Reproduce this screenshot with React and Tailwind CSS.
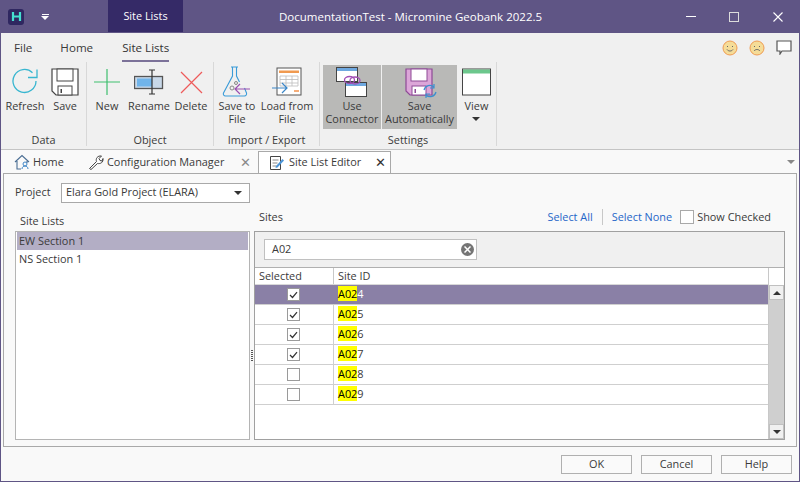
import React from "react";

const F = "font-['Open_Sans','Noto_Sans',sans-serif]";

function Check({ on }) {
  return (
    <span className="flex h-[13px] w-[13px] items-center justify-center border border-[#9a9a9a] bg-white">
      {on && (
        <svg width="9" height="8" viewBox="0 0 9 8" fill="none">
          <path d="M1 4l2.500 2.500L8 1.200" stroke="#333" strokeWidth="1.200" />
        </svg>
      )}
    </span>
  );
}

function Ribbon({ label, w, children, active, className = "" }) {
  return (
    <div className={`flex shrink-0 flex-col items-center ${active ? "bg-[#b9b9b7]" : ""} ${className}`} style={{ width: w }}>
      <div className="flex h-[34px] w-full shrink-0 items-center justify-center">{children}</div>
      <div className="whitespace-nowrap text-center leading-[13px]">{label}</div>
    </div>
  );
}

function Group({ title, w, children }) {
  return (
    <div className="flex h-full shrink-0 flex-col border-r border-[#d8d8d8]" style={{ width: w }}>
      <div className="flex h-[66px] shrink-0 pt-[3px]">{children}</div>
      <div className="pt-[5px] text-center leading-[14px]">{title}</div>
    </div>
  );
}

const Refresh = () => (
  <svg width="28" height="28" viewBox="0 0 28 28" fill="none">
    <path d="M25 13a11.500 11.500 0 1 1-3.500-8.300" stroke="#38b6d0" strokeWidth="1.300" />
    <path d="M17 9.500h9V1.500" stroke="#38b6d0" strokeWidth="1.300" />
  </svg>
);
const Disk = ({ fill = "#fff", stroke = "#444" }) => (
  <svg width="28" height="28" viewBox="0 0 28 28" fill="none">
    <path d="M1 1h26v26H5l-4-4z" fill={fill} stroke={stroke} strokeWidth="1.200" />
    <rect x="6" y="1" width="16" height="12" fill="#fff" stroke={stroke} strokeWidth="1" />
    <rect x="7" y="18" width="14" height="9" fill="#fff" stroke={stroke} strokeWidth="1" />
    <rect x="9.500" y="21" width="1.500" height="4" fill={stroke} />
  </svg>
);
const Flask = () => (
  <svg width="30" height="32" viewBox="0 0 30 32" fill="none">
    <path d="M9 1h7M10.500 1v9L1.500 27c-.6 1.500.3 3 2 3h19c1.500 0 2.400-1.500 2-3l-2-5M14.500 1v9l3 6" stroke="#3a9bd8" strokeWidth="1.100" />
    <circle cx="10" cy="22" r="2" stroke="#888" />
    <circle cx="14" cy="17" r="1.500" stroke="#888" />
    <path d="M28 23H13M18 18l-5 5 5 5" stroke="#9b4fb0" strokeWidth="1.200" />
  </svg>
);
const LoadIcon = () => (
  <svg width="30" height="30" viewBox="0 0 30 30" fill="none">
    <rect x="5" y="1" width="24" height="27" fill="#fff" stroke="#555" />
    <rect x="7" y="3.500" width="20" height="2.500" fill="#f09a50" />
    <path d="M8 9h18v10H8zM8 12.500h18M8 16h18M14 9v10M20 9v10" stroke="#bbb" strokeWidth=".8" />
    <path d="M22 24h5" stroke="#f08030" strokeWidth="1.300" />
    <path d="M0 21h15M10 16l5 5-5 5" stroke="#3a86c8" strokeWidth="1.200" />
  </svg>
);
const Connector = () => (
  <svg width="32" height="32" viewBox="0 0 32 32" fill="none">
    <rect x=".5" y="1.500" width="21" height="14" fill="#fff" stroke="#444" />
    <rect x="1" y="2" width="20" height="3" fill="#6ea8e0" />
    <rect x="9.500" y="16.500" width="21" height="14" fill="#fff" stroke="#444" />
    <rect x="10" y="17" width="20" height="3" fill="#6ea8e0" />
    <ellipse cx="13.500" cy="14" rx="5" ry="3.500" stroke="#a24db5" strokeWidth="1.300" />
    <ellipse cx="19" cy="14.500" rx="5" ry="3.500" stroke="#a24db5" strokeWidth="1.300" />
  </svg>
);

function Tab({ children, icon, close, active, w, closeClass = "text-[#8a8a8a]", mr = "mr-[7px]" }) {
  return (
    <div
      className={`flex shrink-0 items-center ${active ? "h-[22px] self-end border border-b-0 border-[#a9a9a9] bg-white" : "h-full pt-[1px]"}`}
      style={{ width: w }}
    >
      {icon}
      <span className="whitespace-nowrap">{children}</span>
      {close && <span className={`ml-auto ${mr} text-[13px] leading-none ${closeClass}`}>✕</span>}
    </div>
  );
}

const rows = [
  ["4", true, true],
  ["5", true],
  ["6", true],
  ["7", true],
  ["8", false],
  ["9", false],
];

export default function App() {
  return (
    <div className={`${F} flex h-[482px] w-[800px] flex-col overflow-hidden bg-[#5f5585] text-[10.9px] text-[#3a3a3a]`}>
      {/* title bar */}
      <div className="flex h-[33px] shrink-0 items-center text-white">
        <div className="ml-[8px] flex h-[16px] w-[16px] items-center justify-center rounded-[3px] bg-[#2f2760]">
          <svg width="11" height="11" viewBox="0 0 11 11" fill="none">
            <path d="M2 1v9M9 1v9M2 5.500h7" stroke="#45e0d0" strokeWidth="2.200" />
          </svg>
        </div>
        <div className="ml-[17px] flex w-[8px] flex-col items-center gap-[1px]">
          <span className="h-[1px] w-[7px] bg-white" />
          <span className="h-0 w-0 border-x-[4px] border-t-[4px] border-x-transparent border-t-white" />
        </div>
        <div className="ml-[59px] flex h-[32px] w-[75px] items-center justify-center self-start bg-[#352a67]">Site Lists</div>
        <div className="ml-[96px] w-[243px] whitespace-nowrap text-center text-[11.5px]">DocumentationTest - Micromine Geobank 2022.5</div>
        <div className="ml-auto flex items-center text-white">
          <span className="h-[1px] w-[10px] bg-white" />
          <span className="ml-[33px] h-[10px] w-[10px] border border-[#dcdcdc]" />
          <svg className="ml-[34px] mr-[17px]" width="10" height="10" viewBox="0 0 10 10" fill="none">
            <path d="M.5.500l9 9M9.500.500l-9 9" stroke="#fff" strokeWidth="1.100" />
          </svg>
        </div>
      </div>

      {/* body frame */}
      <div className="mx-[1px] mb-[1px] flex min-h-0 flex-1 flex-col bg-[#f9f9f9]">
        {/* ribbon tabs */}
        <div className="flex h-[29px] shrink-0 items-center bg-[#f0f0f0] text-[11.6px]">
          <span className="ml-[13px]">File</span>
          <span className="ml-[28px]">Home</span>
          <span className="relative ml-[29px] font-medium text-[#333]">
            Site Lists
            <span className="absolute -bottom-[6px] left-0 h-[2px] w-full bg-[#7c7299]" />
          </span>
          <div className="ml-auto mr-[7px] flex items-center gap-[11px]">
            <svg width="16" height="16" viewBox="0 0 16 16" fill="none">
              <circle cx="8" cy="8" r="7" fill="#f5dc98" stroke="#ef9b52" />
              <path d="M5 9.500c1.500 2 4.500 2 6 0M5.500 6v1M10.500 6v1" stroke="#666" />
            </svg>
            <svg width="16" height="16" viewBox="0 0 16 16" fill="none">
              <circle cx="8" cy="8" r="7" fill="#f5dc98" stroke="#ef9b52" />
              <path d="M5 11c1.500-2 4.500-2 6 0M5.500 6v1M10.500 6v1" stroke="#666" />
            </svg>
            <svg width="16" height="15" viewBox="0 0 16 15" fill="none">
              <path d="M1 1h14v10H6l-2 3v-3H1z" fill="#fff" stroke="#555" strokeWidth="1.200" />
            </svg>
          </div>
        </div>

        {/* ribbon */}
        <div className="flex h-[88px] shrink-0 border-b border-[#c4c4c4] bg-[#f0f0f0] pb-[3px]">
          <Group title="Data" w={86}>
            <Ribbon label="Refresh" w={48}><Refresh /></Ribbon>
            <Ribbon label="Save" w={32}><Disk fill="#fff" /></Ribbon>
          </Group>
          <Group title="Object" w={127}>
            <Ribbon label="New" w={40}>
              <svg width="26" height="26" viewBox="0 0 26 26" fill="none">
                <path d="M13 0v26M0 13h26" stroke="#3fbf6f" strokeWidth="1.200" />
              </svg>
            </Ribbon>
            <Ribbon label="Rename" w={44}>
              <svg width="30" height="26" viewBox="0 0 30 26" fill="none">
                <rect x=".5" y="7.500" width="28" height="12" fill="#c8d8e8" stroke="#555" strokeWidth="1.300" />
                <rect x="3" y="9.500" width="15" height="8" fill="#70b4ea" />
                <path d="M15 1h6M15 25h6M18 1v24" stroke="#333" strokeWidth="1.200" />
              </svg>
            </Ribbon>
            <Ribbon label="Delete" w={40}>
              <svg width="23" height="23" viewBox="0 0 23 23" fill="none">
                <path d="M1 1l21 21M22 1L1 22" stroke="#ee5a5a" strokeWidth="1.200" />
              </svg>
            </Ribbon>
          </Group>
          <Group title="Import / Export" w={106}>
            <Ribbon label={<>Save to<br />File</>} w={46}><Flask /></Ribbon>
            <Ribbon label={<>Load from<br />File</>} w={54}><LoadIcon /></Ribbon>
          </Group>
          <div className="flex h-full shrink-0 flex-col border-r border-[#d8d8d8]" style={{ width: 177 }}>
            <div className="flex h-[66px] shrink-0 pt-[3px]">
              <div className="ml-[3px] flex h-[64px]">
                <Ribbon label={<>Use<br />Connector</>} w={58} active><Connector /></Ribbon>
              </div>
              <div className="ml-[1px] flex h-[64px]">
                <Ribbon label={<>Save<br />Automatically</>} w={75} active>
                  <span className="relative block h-[28px] w-[30px]">
                    <Disk fill="#dca6d8" stroke="#8e4a96" />
                    <svg className="absolute -bottom-[3px] -right-[3px]" width="16" height="16" viewBox="0 0 16 16" fill="none">
                      <path d="M2 7a6 6 0 0 1 10-3M14 9a6 6 0 0 1-10 3M12 1v4H8M4 15v-4h4" stroke="#3a8fd0" strokeWidth="1.200" />
                    </svg>
                  </span>
                </Ribbon>
              </div>
              <Ribbon label={<>View<br /><span className="mx-auto mt-[5px] block h-0 w-0 border-x-[4px] border-t-[4px] border-x-transparent border-t-[#333]" /></>} w={39}>
                <svg width="29" height="28" viewBox="0 0 29 28" fill="none">
                  <rect x=".5" y="1" width="28" height="26" fill="#fff" stroke="#444" />
                  <rect x="1" y="1.500" width="27" height="4" fill="#6cc78c" />
                </svg>
              </Ribbon>
            </div>
            <div className="pt-[5px] text-center leading-[14px]">Settings</div>
          </div>
        </div>

        {/* doc tabs */}
        <div className="flex h-[23px] shrink-0 items-center bg-[#f9f9f9]">
          <div className="flex h-full items-center">
            <Tab w={72} icon={
              <svg className="ml-[13px] mr-[3px]" width="16" height="16" viewBox="0 0 16 16" fill="none">
                <path d="M1 8l7-6.500L15 8M3 7v8h4M13 7v2" stroke="#4a6d93" strokeWidth="1.100" />
                <circle cx="11" cy="10" r="2" stroke="#3f86c7" />
                <path d="M8 15c0-2 1.500-3 3-3s3 1 3 3" stroke="#3f86c7" />
              </svg>}>Home</Tab>
            <Tab w={185} close icon={
              <svg className="ml-[15px] mr-[3px]" width="16" height="16" viewBox="0 0 16 16" fill="none">
                <path d="M1.500 14.500l7-7c-1-3 1-6 5-5.500l-2.500 2.500 1 2 2 .5L15 4.500c.5 4-2.500 5.500-5.500 5l-6.500 6z" fill="#fff" stroke="#444" />
              </svg>}>Configuration Manager</Tab>
            <Tab w={133} active close mr="mr-[4px]" closeClass="text-[#333]" icon={
              <svg className="ml-[10px] mr-[4px]" width="16" height="16" viewBox="0 0 16 16" fill="none">
                <path d="M1.500 1.500h10v13h-10z" fill="#fff" stroke="#444" />
                <path d="M3.500 5h6M3.500 8h5M3.500 11h4" stroke="#888" />
                <path d="M7 11l6.500-7 1.500 1.500-6.500 7-2 .5z" fill="#4d96d8" />
              </svg>}>Site List Editor</Tab>
          </div>
          <span className="ml-auto mr-[4px] h-0 w-0 border-x-[4px] border-t-[4px] border-x-transparent border-t-[#888]" />
        </div>

        {/* editor panel */}
        <div className="mx-[2px] flex min-h-0 flex-1 flex-col border border-[#a9a9a9] bg-[#f9f9f9]">
          <div className="flex h-[37px] shrink-0 items-center">
            <span className="ml-[11px] w-[46px]">Project</span>
            <div className="flex h-[20px] w-[189px] items-center border border-[#a9a9a9] bg-white pl-[4px]">
              <span className="whitespace-nowrap">Elara Gold Project (ELARA)</span>
              <span className="ml-auto mr-[7px] h-0 w-0 border-x-[4px] border-t-[4px] border-x-transparent border-t-[#333]" />
            </div>
          </div>
          <div className="flex min-h-0 flex-1 pb-[6px]">
            {/* left */}
            <div className="ml-[11px] flex w-[235px] shrink-0 flex-col">
              <div className="h-[20px] pl-[5px] pt-[2px]">Site Lists</div>
              <div className="flex-1 border border-[#b4b4b4] bg-white px-[1px]">
                <div className="flex h-[18px] items-center bg-[#b3aec5] pl-[2px]">EW Section 1</div>
                <div className="flex h-[18px] items-center pl-[2px]">NS Section 1</div>
              </div>
            </div>
            {/* splitter */}
            <div className="flex w-[4px] shrink-0 flex-col items-center justify-center gap-[1px] pt-[60px]">
              {[0, 1, 2, 3, 4, 5].map((i) => (
                <span key={i} className="h-[1px] w-[2px] bg-[#555]" />
              ))}
            </div>
            {/* right */}
            <div className="flex min-w-0 flex-1 flex-col pr-[11px]">
              <div className="-mt-[8px] flex h-[28px] shrink-0 items-center">
                <span className="ml-[5px]">Sites</span>
                <div className="ml-auto flex items-center">
                  <span className="text-[#1f66c8]">Select All</span>
                  <span className="mx-[9px] h-[16px] w-[1px] bg-[#c8c8c8]" />
                  <span className="text-[#1f66c8]">Select None</span>
                  <span className="ml-[8px] mr-[14px] flex items-center">
                    <span className="h-[14px] w-[14px] border border-[#a9a9a9] bg-white" />
                    <span className="ml-[3px]">Show Checked</span>
                  </span>
                </div>
              </div>
              <div className="flex min-h-0 flex-1 flex-col border border-[#a0a0a0] bg-white">
                <div className="flex h-[35px] shrink-0 items-center bg-[#f0f0f0] pl-[9px]">
                  <div className="flex h-[21px] w-[213px] items-center border border-[#c0c0c0] bg-white pl-[7px]">
                    A02
                    <span className="ml-auto mr-[2px] flex h-[13px] w-[13px] items-center justify-center rounded-full bg-[#757575]">
                      <svg width="7" height="7" viewBox="0 0 7 7" fill="none">
                        <path d="M.5.500l6 6M6.500.500l-6 6" stroke="#fff" strokeWidth="1.500" />
                      </svg>
                    </span>
                  </div>
                </div>
                <div className="flex min-h-0 flex-1 border-t border-[#b0b0b0]">
                  <div className="flex min-w-0 flex-1 flex-col">
                    <div className="flex h-[17px] shrink-0 items-center border-b border-[#d8d8d8]">
                      <span className="flex h-full w-[79px] items-center border-r border-[#c8c8c8] pl-[4px]">Selected</span>
                      <span className="pl-[4px]">Site ID</span>
                    </div>
                    {rows.map(([n, on, sel]) => (
                      <div key={n} className={`flex h-[20px] shrink-0 items-center border-b border-[#cfcfcf] ${sel ? "bg-[#8a80a6]" : ""}`}>
                        <span className={`flex h-full w-[79px] shrink-0 items-center justify-center border-r pr-[2px] ${sel ? "border-transparent" : "border-[#cfcfcf]"}`}>
                          <Check on={on} />
                        </span>
                        <span className="pl-[4px]">
                          <span className="bg-[#ffff00] text-black">A02</span>
                          <span className={sel ? "text-white" : ""}>{n}</span>
                        </span>
                      </div>
                    ))}
                  </div>
                  {/* scrollbar */}
                  <div className="flex w-[16px] shrink-0 flex-col border-l border-[#c8c8c8]">
                    <div className="h-[17px] shrink-0 bg-white" />
                    <div className="flex flex-1 flex-col justify-between bg-[#cfcfcf]">
                      <span className="flex h-[15px] items-center justify-center border border-[#c0c0c0] bg-[#f0f0f0]">
                        <span className="h-0 w-0 border-x-[4px] border-b-[4px] border-x-transparent border-b-[#333]" />
                      </span>
                      <span className="flex h-[15px] items-center justify-center border border-[#c0c0c0] bg-[#f0f0f0]">
                        <span className="h-0 w-0 border-x-[4px] border-t-[4px] border-x-transparent border-t-[#333]" />
                      </span>
                    </div>
                  </div>
                </div>
              </div>
            </div>
          </div>
        </div>

        {/* footer */}
        <div className="flex h-[34px] shrink-0 items-center justify-end gap-[9px] pr-[7px]">
          {["OK", "Cancel", "Help"].map((t) => (
            <div key={t} className="flex h-[19px] w-[71px] items-center justify-center border border-[#b0b0b0] bg-[#fafafa]">{t}</div>
          ))}
        </div>
      </div>
    </div>
  );
}
